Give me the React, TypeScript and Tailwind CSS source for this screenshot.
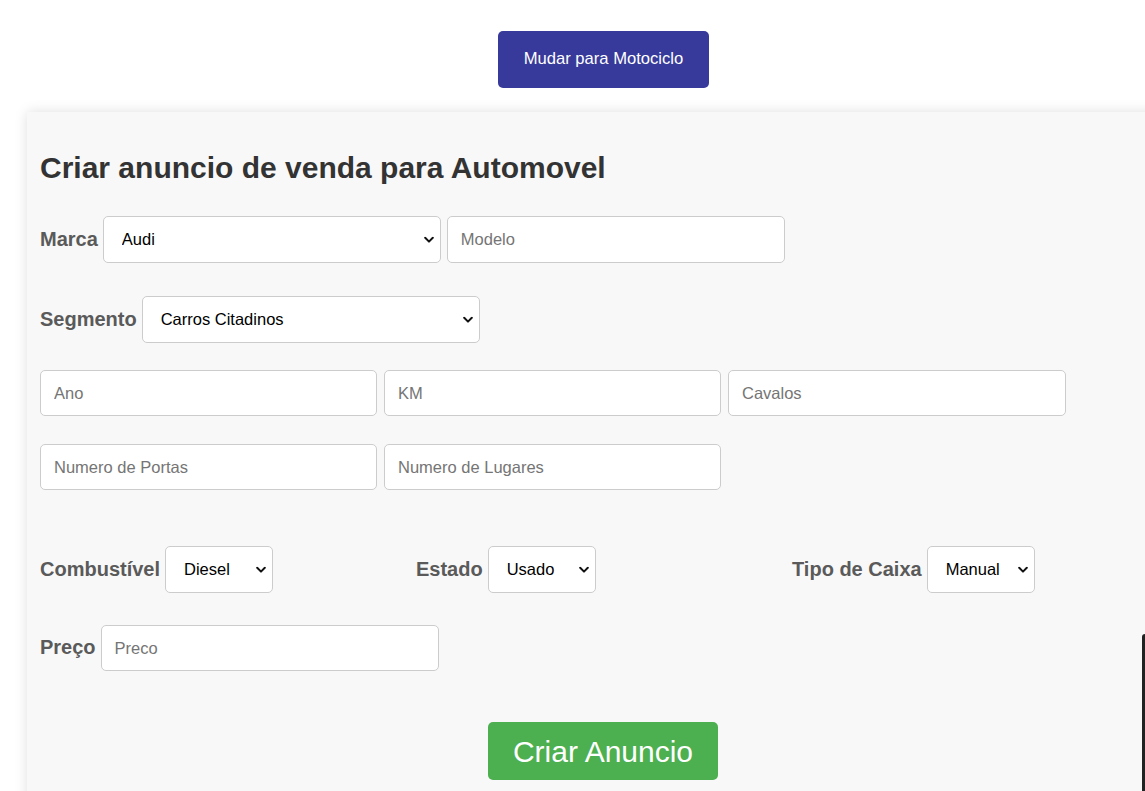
import React from "react";

const font = { fontFamily: '"Liberation Sans", Arial, sans-serif' };

function Chevron() {
  return (
    <svg
      className="pointer-events-none absolute right-[7px] top-1/2 -translate-y-1/2"
      width="10"
      height="7"
      viewBox="0 0 10 7"
      fill="none"
    >
      <path d="M1.2 1.3l3.8 3.8 3.8-3.8" stroke="#111" strokeWidth="2" strokeLinecap="round" strokeLinejoin="round" />
    </svg>
  );
}

function Select({ value, options, w }: { value: string; options: string[]; w: string }) {
  return (
    <div className={`relative ${w} h-[47px]`}>
      <select
        defaultValue={value}
        className="h-full w-full appearance-none rounded-[5px] border border-[#cccccc] bg-white pl-[18px] pr-[24px] text-[16.5px] text-black outline-none"
      >
        {options.map((o) => (
          <option key={o}>{o}</option>
        ))}
      </select>
      <Chevron />
    </div>
  );
}

function Input({ placeholder, w = "w-[337px]", h = "h-[46px]" }: { placeholder: string; w?: string; h?: string }) {
  return (
    <input
      placeholder={placeholder}
      className={`${w} ${h} rounded-[5px] border border-[#cccccc] bg-white px-[13px] text-[16.5px] text-black outline-none placeholder:text-[#757575]`}
    />
  );
}

function Label({ children }: { children: React.ReactNode }) {
  return <span className="-mt-[2px] text-[20px] font-bold leading-[24px] text-[#5a5a5a]">{children}</span>;
}

export default function App() {
  return (
    <div className="relative h-[791px] w-[1145px] overflow-hidden bg-white" style={font}>
      <div className="w-[1207px]">
        <div className="flex justify-center pt-[31px]">
          <button className="h-[57px] w-[211px] rounded-[5px] bg-[#373a9a] text-[16.6px] text-white">
            Mudar para Motociclo
          </button>
        </div>
        <div className="ml-[27px] mt-[24px] w-[1154px] bg-[#f8f8f8] px-[13px] pt-[39px] pb-[40px] shadow-[0_0_12px_rgba(0,0,0,0.13)]">
          <h2 className="text-[30px] font-bold leading-[34px] text-[#333333]">
            Criar anuncio de venda para Automovel
          </h2>

          <div className="mt-[31px] flex items-center">
            <Label>Marca</Label>
            <div className="ml-[5px]">
              <Select value="Audi" options={["Audi", "BMW", "Mercedes"]} w="w-[338px]" />
            </div>
            <div className="ml-[6px]">
              <Input placeholder="Modelo" w="w-[338px]" h="h-[47px]" />
            </div>
          </div>

          <div className="mt-[33px] flex items-center">
            <Label>Segmento</Label>
            <div className="ml-[5px]">
              <Select value="Carros Citadinos" options={["Carros Citadinos", "SUV", "Carrinhas"]} w="w-[338px]" />
            </div>
          </div>

          <div className="mt-[27px] flex gap-[7px]">
            <Input placeholder="Ano" />
            <Input placeholder="KM" />
            <Input placeholder="Cavalos" w="w-[338px]" />
          </div>

          <div className="mt-[28px] flex gap-[7px]">
            <Input placeholder="Numero de Portas" />
            <Input placeholder="Numero de Lugares" />
          </div>

          <div className="mt-[56px] grid grid-cols-[376px_376px_376px]">
            <div className="flex items-center gap-[5px]">
              <Label>Combustível</Label>
              <Select value="Diesel" options={["Diesel", "Gasolina", "Elétrico"]} w="w-[108px]" />
            </div>
            <div className="flex items-center gap-[5px]">
              <Label>Estado</Label>
              <Select value="Usado" options={["Usado", "Novo"]} w="w-[108px]" />
            </div>
            <div className="flex items-center gap-[5px]">
              <Label>Tipo de Caixa</Label>
              <Select value="Manual" options={["Manual", "Automática"]} w="w-[108px]" />
            </div>
          </div>

          <div className="mt-[32px] flex items-center gap-[5px]">
            <Label>Preço</Label>
            <Input placeholder="Preco" w="w-[338px]" />
          </div>

          <div className="mt-[51px] flex justify-center pr-[2px]">
            <button className="h-[58px] w-[230px] rounded-[5px] bg-[#4caf50] text-[30px] text-white">
              Criar Anuncio
            </button>
          </div>
        </div>
      </div>
      <div className="absolute right-0 top-[634px] h-[157px] w-[3px] rounded-tl-[3px] bg-[#222222]" />
    </div>
  );
}
